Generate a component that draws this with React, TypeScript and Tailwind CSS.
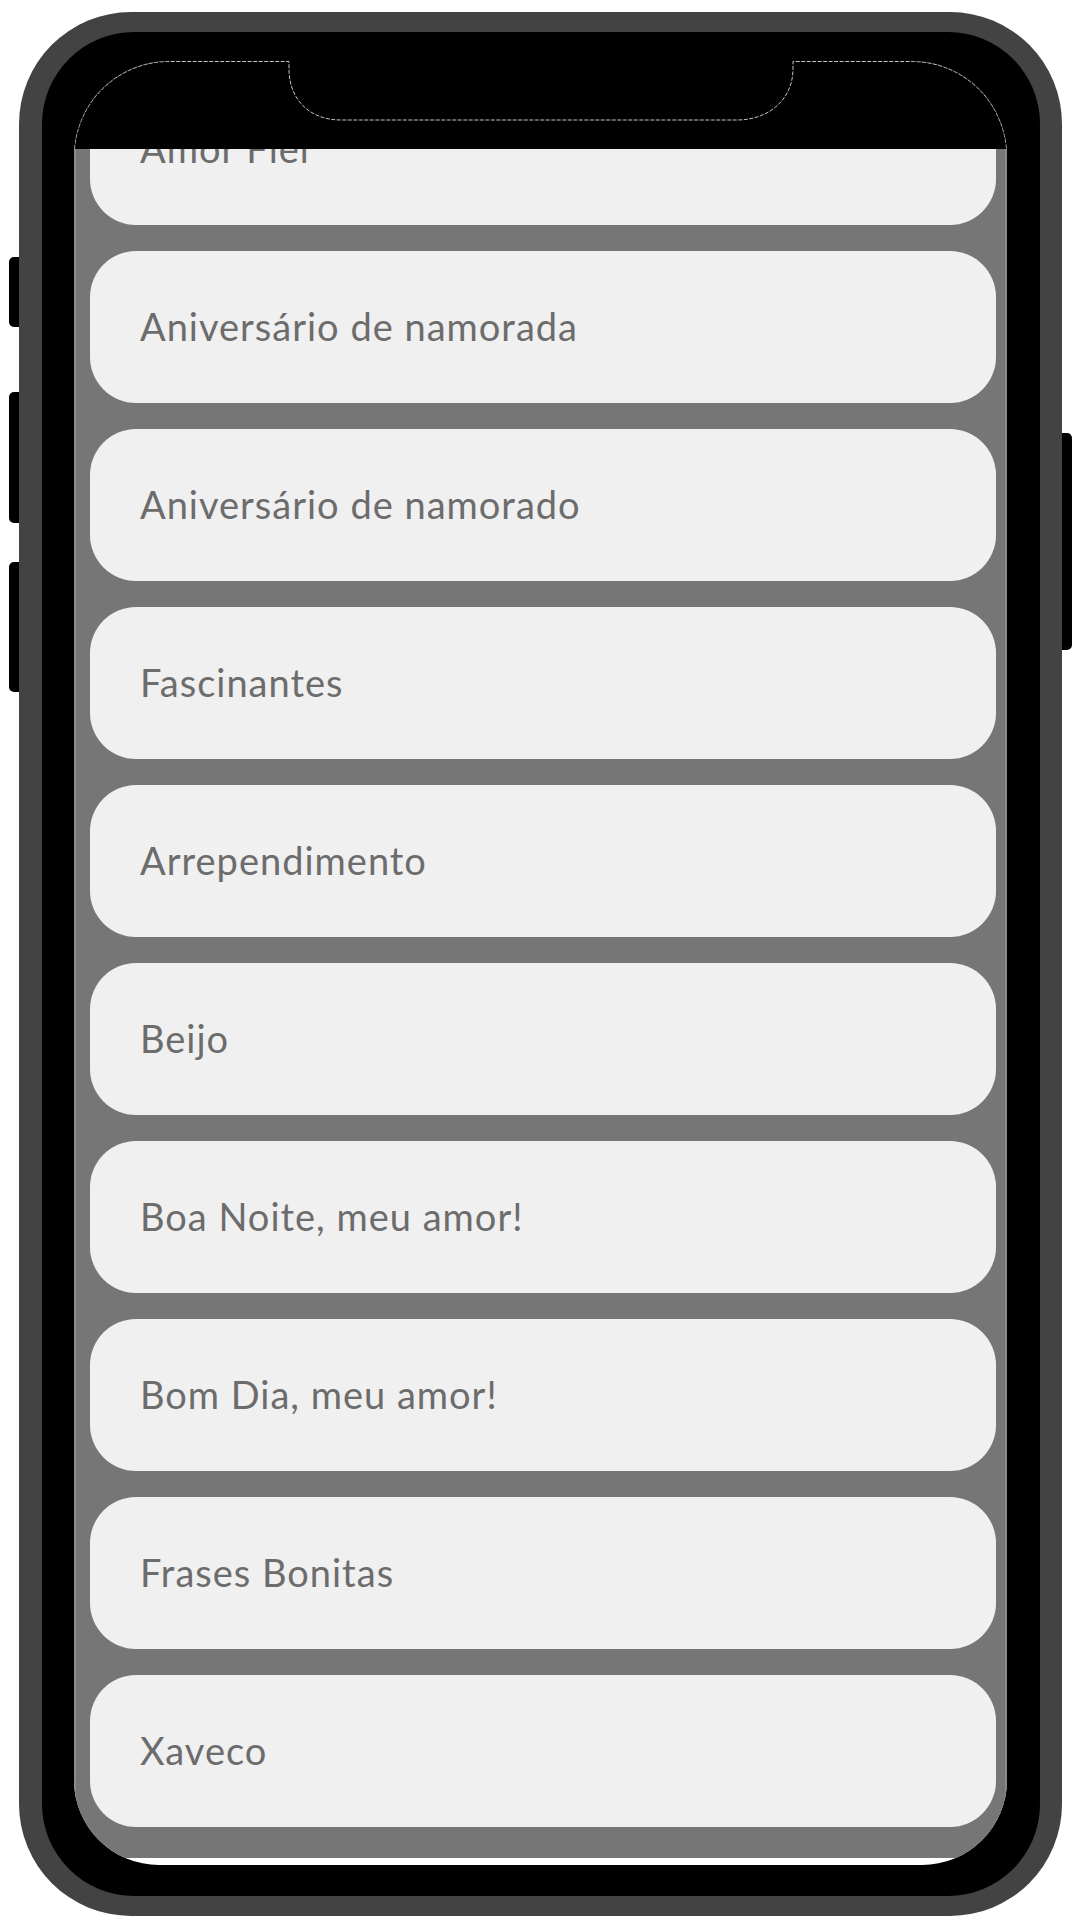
import React from "react";

const items = [
  "Amor Fiel",
  "Aniversário de namorada",
  "Aniversário de namorado",
  "Fascinantes",
  "Arrependimento",
  "Beijo",
  "Boa Noite, meu amor!",
  "Bom Dia, meu amor!",
  "Frases Bonitas",
  "Xaveco",
];

function ScreenOutline() {
  return (
    <svg
      className="absolute inset-0"
      width="933"
      height="88"
      viewBox="0 0 933 88"
      fill="none"
    >
      <path
        d="M0.5 88 A95 95 0 0 1 95 0.5 L215 0.5 L215 8 C215 38 235 59 267 59 L663 59 C695 59 719 38 719 8 L719 0.5 L838 0.5 A95 95 0 0 1 932.5 88"
        stroke="#c4c4c4"
        strokeWidth="1"
        strokeDasharray="4 1.5"
      />
    </svg>
  );
}

export default function App() {
  return (
    <div className="w-[1080px] h-[1920px] bg-white flex pt-[12px] pl-[9px]">
      <div className="flex flex-col w-[11px] shrink-0 pt-[245px]">
        <div className="h-[70px] bg-black rounded-l-[5px]" />
        <div className="h-[131px] mt-[65px] bg-black rounded-l-[5px]" />
        <div className="h-[130px] mt-[39px] bg-black rounded-l-[5px]" />
      </div>
      <div className="w-[1043px] h-[1904px] -ml-[1px] shrink-0 rounded-[112px] bg-[#434343] pt-[20px] pl-[23px] pr-[22px] pb-[20px]">
        <div className="w-full h-full rounded-[92px] bg-black pt-[29px] pl-[32px] pr-[33px] pb-[31px]">
          <div className="w-full h-full rounded-t-[95px] rounded-b-[85px] overflow-hidden bg-white flex flex-col">
            <div className="relative h-[88px] shrink-0 bg-black z-10">
              <ScreenOutline />
            </div>
            <div className="h-[1709px] shrink-0 overflow-hidden bg-[#767676] border-l-2 border-r-2 border-l-[#8c8c8c] border-r-[#8a8a8a]">
              <div className="flex flex-col gap-[26px] mt-[-76px] pl-[14px] pr-[9px]">
                {items.map((t) => (
                  <div
                    key={t}
                    className="h-[152px] shrink-0 rounded-[46px] bg-[#f0f0f0] flex items-center pl-[50px] pb-[2px]"
                  >
                    <span
                      className="text-[38px] leading-none tracking-[1px] text-[#6c6c6c]"
                      style={{ fontFamily: "Lato, 'Open Sans', sans-serif" }}
                    >
                      {t}
                    </span>
                  </div>
                ))}
              </div>
            </div>
          </div>
        </div>
      </div>
      <div className="flex flex-col w-[10px] shrink-0 pt-[421px]">
        <div className="h-[217px] bg-black rounded-r-[5px]" />
      </div>
    </div>
  );
}
